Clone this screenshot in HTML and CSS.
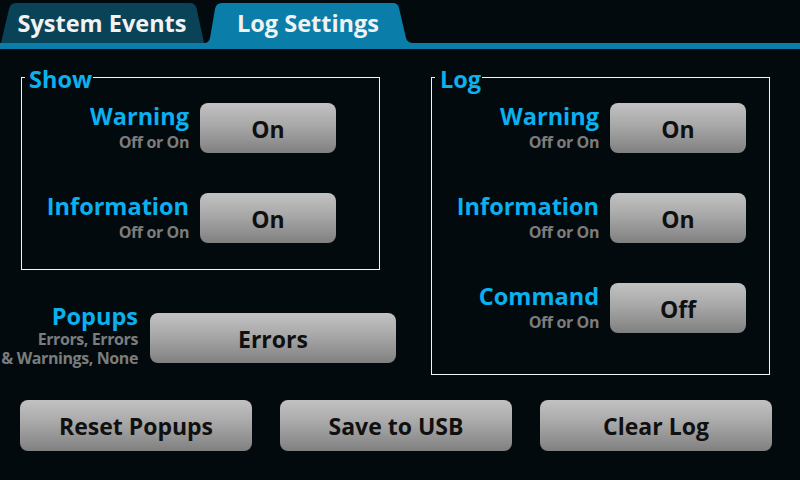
FILE: index.html
```html
<!DOCTYPE html>
<html>
<head>
<meta charset="utf-8">
<link rel="stylesheet" href="styles.css">
</head>
<body>
<div class="screen">
  <div class="tabs">
    <div class="tab tab-inactive">
      <svg class="tab-shape" width="206" height="43" viewBox="0 0 206 43" preserveAspectRatio="none"><path d="M1,43 L9,9 Q10,3 16,3 L190,3 Q195,3 196.5,8 L204,43 Z" fill="#0a4358"/></svg>
      <span class="tab-text">System Events</span>
    </div>
    <div class="tab tab-active">
      <svg class="tab-shape" width="212" height="43" viewBox="0 0 212 43" preserveAspectRatio="none"><path d="M0,43 Q5,43 6,38 L11,9 Q12,3 18,3 L189,3 Q194,3 195,8 L202,38 Q203,43 210,43 Z" fill="#0a7ea8"/></svg>
      <span class="tab-text">Log Settings</span>
    </div>
  </div>
  <div class="tabbar"></div>

  <div class="content">
    <div class="col-left">
      <div class="frame frame-show">
        <span class="legend legend-show">Show</span>
        <div class="row">
          <div class="label"><div class="title">Warning</div><div class="sub">Off or On</div></div>
          <div class="btn btn-small">On</div>
        </div>
        <div class="row">
          <div class="label"><div class="title">Information</div><div class="sub">Off or On</div></div>
          <div class="btn btn-small">On</div>
        </div>
      </div>
      <div class="popups">
        <div class="label label-popups"><div class="title">Popups</div><div class="sub">Errors, Errors</div><div class="sub">&amp; Warnings, None</div></div>
        <div class="btn btn-wide">Errors</div>
      </div>
    </div>
    <div class="col-right">
      <div class="frame frame-log">
        <span class="legend legend-log">Log</span>
        <div class="row">
          <div class="label"><div class="title">Warning</div><div class="sub">Off or On</div></div>
          <div class="btn btn-small">On</div>
        </div>
        <div class="row">
          <div class="label"><div class="title">Information</div><div class="sub">Off or On</div></div>
          <div class="btn btn-small">On</div>
        </div>
        <div class="row">
          <div class="label"><div class="title">Command</div><div class="sub">Off or On</div></div>
          <div class="btn btn-small">Off</div>
        </div>
      </div>
    </div>
  </div>

  <div class="actions">
    <div class="btn btn-action">Reset Popups</div>
    <div class="btn btn-action">Save to USB</div>
    <div class="btn btn-action">Clear Log</div>
  </div>
</div>
</body>
</html>
```
FILE: styles.css
```css
* { box-sizing: border-box; }
html, body { margin: 0; padding: 0; }
body {
  background: #020a0e;
  font-family: "Open Sans", "DejaVu Sans", sans-serif;
  font-weight: 700;
}
.screen {
  width: 800px;
  height: 480px;
  overflow: hidden;
  background: #020a0e;
}
.tabs {
  display: flex;
  height: 43px;
}
.tab {
  position: relative;
  height: 43px;
  display: flex;
  align-items: center;
  justify-content: center;
  padding-top: 5px;
}
.tab-inactive { width: 206px; }
.tab-active { width: 212px; margin-left: -2px; }
.tab-shape {
  position: absolute;
  left: 0;
  top: 0;
}
.tab-text {
  position: relative;
  color: #f2f2f2;
  font-size: 23.5px;
  line-height: 1;
  white-space: nowrap;
}
.tab-inactive .tab-text { margin-left: -2px; }
.tab-active .tab-text { margin-left: -4px; }
.tabbar {
  height: 6px;
  background: #0a7ea8;
}
.content {
  display: flex;
  padding-top: 28px;
  height: 351px;
}
.col-left {
  width: 396px;
}
.col-right {
  margin-left: 35px;
}
.frame {
  position: relative;
  border: 1px solid #f4f4f4;
  display: flex;
  flex-direction: column;
  padding-top: 25px;
  gap: 40px;
}
.frame-show {
  margin-left: 21px;
  width: 359px;
  height: 193px;
  padding-right: 43px;
}
.frame-log {
  width: 339px;
  height: 298px;
  padding-right: 23px;
}
.legend {
  position: absolute;
  top: -12px;
  background: #020a0e;
  color: #0bb0ef;
  font-size: 23.5px;
  line-height: 26px;
  padding: 0 1px 0 4px;
}
.legend-show { left: 3px; }
.legend-log { left: 3px; padding-left: 5px; }
.row {
  display: flex;
  justify-content: flex-end;
  align-items: flex-start;
  gap: 11px;
}
.label {
  text-align: right;
  display: flex;
  flex-direction: column;
  white-space: nowrap;
}
.title {
  color: #0bb0ef;
  font-size: 23.5px;
  line-height: 28px;
  margin-top: -1px;
}
.sub {
  color: #7c7c7c;
  font-size: 16px;
  line-height: 19px;
  letter-spacing: -0.4px;
}
.row .sub { margin-top: 3px; }
.btn {
  display: flex;
  align-items: center;
  justify-content: center;
  height: 50px;
  border-radius: 8px;
  background: linear-gradient(to bottom, #c2c2c2 0%, #a8a8a8 45%, #808080 100%);
  color: #101010;
  font-size: 23px;
  padding-top: 1px;
}
.btn-small { width: 136px; }
.popups {
  display: flex;
  align-items: flex-start;
  margin-top: 43px;
  gap: 12px;
}
.label-popups {
  width: 138px;
  margin-top: -9px;
}
.label-popups .title { line-height: 27px; }
.btn-wide { width: 246px; }
.actions {
  display: flex;
  gap: 28px;
  padding-left: 20px;
}
.btn-action {
  width: 232px;
  height: 51px;
}
```
